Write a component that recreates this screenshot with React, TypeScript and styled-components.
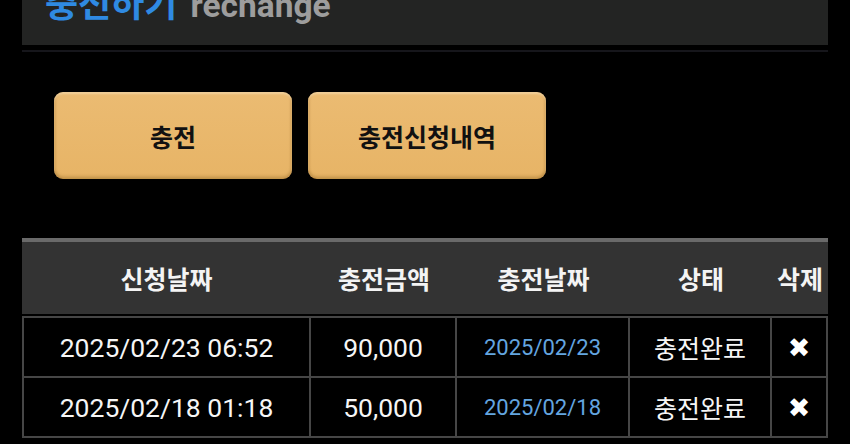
import styled, { createGlobalStyle } from "styled-components";

const GlobalStyle = createGlobalStyle`
  html, body {
    margin: 0;
    padding: 0;
    background: #000;
    overflow: hidden;
  }
  body {
    font-family: Roboto, "Noto Sans CJK KR", sans-serif;
    color: #fff;
  }
`;

const rows = [
  { requested: "2025/02/23 06:52", amount: "90,000", charged: "2025/02/23", status: "충전완료" },
  { requested: "2025/02/18 01:18", amount: "50,000", charged: "2025/02/18", status: "충전완료" },
];

const columns = [
  { title: "신청날짜", width: 289 },
  { title: "충전금액", width: 146 },
  { title: "충전날짜", width: 173 },
  { title: "상태", width: 142 },
  { title: "삭제", width: 56 },
];

export default function App() {
  return (
    <>
      <GlobalStyle />
      <Page>
        <TitleBar>
          <Title>충전하기</Title>
          <SubTitle>rechange</SubTitle>
        </TitleBar>
        <Divider />
        <ButtonRow>
          <TabButton>충전</TabButton>
          <TabButton>충전신청내역</TabButton>
        </ButtonRow>
        <HistoryTable>
          <colgroup>
            {columns.map(col => (
              <col key={col.title} style={{ width: col.width }} />
            ))}
          </colgroup>
          <thead>
            <tr>
              {columns.map(col => (
                <HeadCell key={col.title}>{col.title}</HeadCell>
              ))}
            </tr>
          </thead>
          <tbody>
            {rows.map(row => (
              <tr key={row.requested}>
                <Cell>{row.requested}</Cell>
                <Cell>{row.amount}</Cell>
                <Cell $tone="date">{row.charged}</Cell>
                <Cell $tone="status">{row.status}</Cell>
                <Cell>
                  <DeleteMark>✖</DeleteMark>
                </Cell>
              </tr>
            ))}
          </tbody>
        </HistoryTable>
      </Page>
    </>
  );
}

const Page = styled.div`
  display: flex;
  flex-direction: column;
  padding: 0 22px;
  margin-top: -30px;
`;

const TitleBar = styled.div`
  display: flex;
  align-items: baseline;
  gap: 13px;
  height: 75px;
  padding: 10px 23px 0;
  box-sizing: border-box;
  background-color: #232423;
`;

const Title = styled.h1`
  margin: 0;
  font-family: "Noto Sans CJK KR", sans-serif;
  font-size: 36px;
  font-weight: 700;
  line-height: 42px;
  color: #2f8ae2;
`;

const SubTitle = styled.span`
  font-family: Roboto, sans-serif;
  font-size: 33.5px;
  font-weight: 700;
  color: #9d9d9d;
`;

const Divider = styled.div`
  height: 2px;
  margin-top: 5px;
  background-color: #16161b;
`;

const ButtonRow = styled.div`
  display: flex;
  gap: 16px;
  margin-top: 40px;
  padding-left: 32px;
`;

const TabButton = styled.button`
  width: 238px;
  height: 87px;
  border: none;
  border-radius: 9px;
  background: linear-gradient(#ebbb72, #e7b466);
  box-shadow: inset 0 2px 2px rgba(255, 240, 210, 0.45), inset 0 -3px 3px rgba(120, 80, 20, 0.25),
    inset 2px 0 2px rgba(120, 80, 20, 0.12), inset -2px 0 2px rgba(120, 80, 20, 0.12);
  font-family: "Noto Sans CJK KR", sans-serif;
  font-size: 25px;
  font-weight: 700;
  color: #111;
  cursor: pointer;
`;

const HistoryTable = styled.table`
  width: 806px;
  margin-top: 59px;
  table-layout: fixed;
  border-collapse: separate;
  border-spacing: 0;
`;

const HeadCell = styled.th`
  height: 72px;
  padding: 0;
  border-top: 4px solid #6a6a6a;
  border-bottom: 2px solid #000;
  background-color: #333333;
  font-family: "Noto Sans CJK KR", sans-serif;
  font-size: 25px;
  font-weight: 700;
  color: #f4f4f4;
  text-align: center;
`;

const Cell = styled.td<{ $tone?: "date" | "status" }>`
  height: 58px;
  padding: 0;
  border-right: 2px solid #464646;
  border-bottom: 2px solid #464646;
  background-color: #000;
  text-align: center;
  font-family: ${p => (p.$tone === "status" ? '"Noto Sans CJK KR", sans-serif' : "Roboto, sans-serif")};
  font-size: ${p => (p.$tone === "date" ? "22px" : p.$tone === "status" ? "25px" : "26.5px")};
  color: ${p => (p.$tone === "date" ? "#64a6e0" : "#f6f6f6")};

  &:first-child {
    border-left: 2px solid #464646;
  }

  tbody tr:first-child & {
    border-top: 2px solid #464646;
  }
`;

const DeleteMark = styled.span`
  font-family: "DejaVu Sans", sans-serif;
  font-size: 27px;
  color: #fff;
`;
